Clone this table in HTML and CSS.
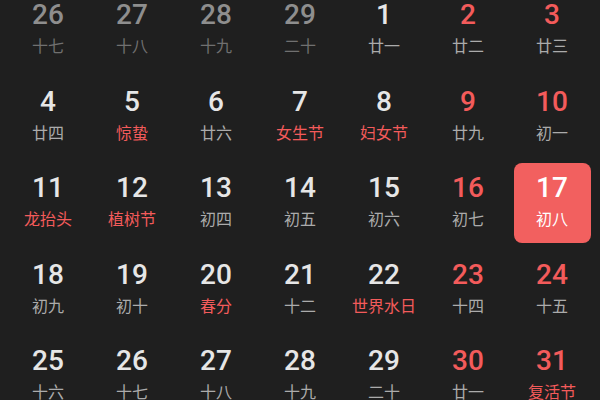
FILE: index.html
```html
<!DOCTYPE html>
<html lang="zh-CN">
<head>
<meta charset="utf-8">
<link rel="stylesheet" href="styles.css">
</head>
<body>
<div class="cal">
  <div class="cell other"><span class="num">26</span><span class="lun">十七</span></div>
  <div class="cell other"><span class="num">27</span><span class="lun">十八</span></div>
  <div class="cell other"><span class="num">28</span><span class="lun">十九</span></div>
  <div class="cell other"><span class="num">29</span><span class="lun">二十</span></div>
  <div class="cell"><span class="num">1</span><span class="lun">廿一</span></div>
  <div class="cell"><span class="num red">2</span><span class="lun">廿二</span></div>
  <div class="cell"><span class="num red">3</span><span class="lun">廿三</span></div>

  <div class="cell"><span class="num">4</span><span class="lun">廿四</span></div>
  <div class="cell"><span class="num">5</span><span class="lun red">惊蛰</span></div>
  <div class="cell"><span class="num">6</span><span class="lun">廿六</span></div>
  <div class="cell"><span class="num">7</span><span class="lun red">女生节</span></div>
  <div class="cell"><span class="num">8</span><span class="lun red">妇女节</span></div>
  <div class="cell"><span class="num red">9</span><span class="lun">廿九</span></div>
  <div class="cell"><span class="num red">10</span><span class="lun">初一</span></div>

  <div class="cell"><span class="num">11</span><span class="lun red">龙抬头</span></div>
  <div class="cell"><span class="num">12</span><span class="lun red">植树节</span></div>
  <div class="cell"><span class="num">13</span><span class="lun">初四</span></div>
  <div class="cell"><span class="num">14</span><span class="lun">初五</span></div>
  <div class="cell"><span class="num">15</span><span class="lun">初六</span></div>
  <div class="cell"><span class="num red">16</span><span class="lun">初七</span></div>
  <div class="cell"><div class="today"><span class="num">17</span><span class="lun">初八</span></div></div>

  <div class="cell"><span class="num">18</span><span class="lun">初九</span></div>
  <div class="cell"><span class="num">19</span><span class="lun">初十</span></div>
  <div class="cell"><span class="num">20</span><span class="lun red">春分</span></div>
  <div class="cell"><span class="num">21</span><span class="lun">十二</span></div>
  <div class="cell"><span class="num">22</span><span class="lun red">世界水日</span></div>
  <div class="cell"><span class="num red">23</span><span class="lun">十四</span></div>
  <div class="cell"><span class="num red">24</span><span class="lun">十五</span></div>

  <div class="cell"><span class="num">25</span><span class="lun">十六</span></div>
  <div class="cell"><span class="num">26</span><span class="lun">十七</span></div>
  <div class="cell"><span class="num">27</span><span class="lun">十八</span></div>
  <div class="cell"><span class="num">28</span><span class="lun">十九</span></div>
  <div class="cell"><span class="num">29</span><span class="lun">二十</span></div>
  <div class="cell"><span class="num red">30</span><span class="lun">廿一</span></div>
  <div class="cell"><span class="num red">31</span><span class="lun red">复活节</span></div>
</div>
</body>
</html>
```
FILE: styles.css
```css
html, body {
  margin: 0;
  padding: 0;
  background: #1f1f1f;
  width: 600px;
  height: 400px;
  overflow: hidden;
}
.cal {
  display: grid;
  grid-template-columns: repeat(7, 84px);
  grid-auto-rows: 86.5px;
  margin: -13px 6px 0 6px;
}
.cell {
  display: flex;
  flex-direction: column;
  align-items: center;
  justify-content: center;
}
.num {
  font-family: Roboto, "Noto Sans", sans-serif;
  font-weight: 500;
  font-size: 28px;
  line-height: 30px;
  color: #e6e6e6;
}
.lun {
  font-family: "Noto Sans CJK SC", "Noto Sans", sans-serif;
  font-size: 16px;
  line-height: 30px;
  color: #ababab;
}
.other .num { color: #8e8e8e; }
.other .lun { color: #707070; }
.num.red, .lun.red { color: #f35b5b; }
.today {
  width: 77px;
  height: 80px;
  border-radius: 8px;
  background: #f2605f;
  display: flex;
  flex-direction: column;
  align-items: center;
  justify-content: center;
}
.today .num, .today .lun { color: #ffffff; }
```
